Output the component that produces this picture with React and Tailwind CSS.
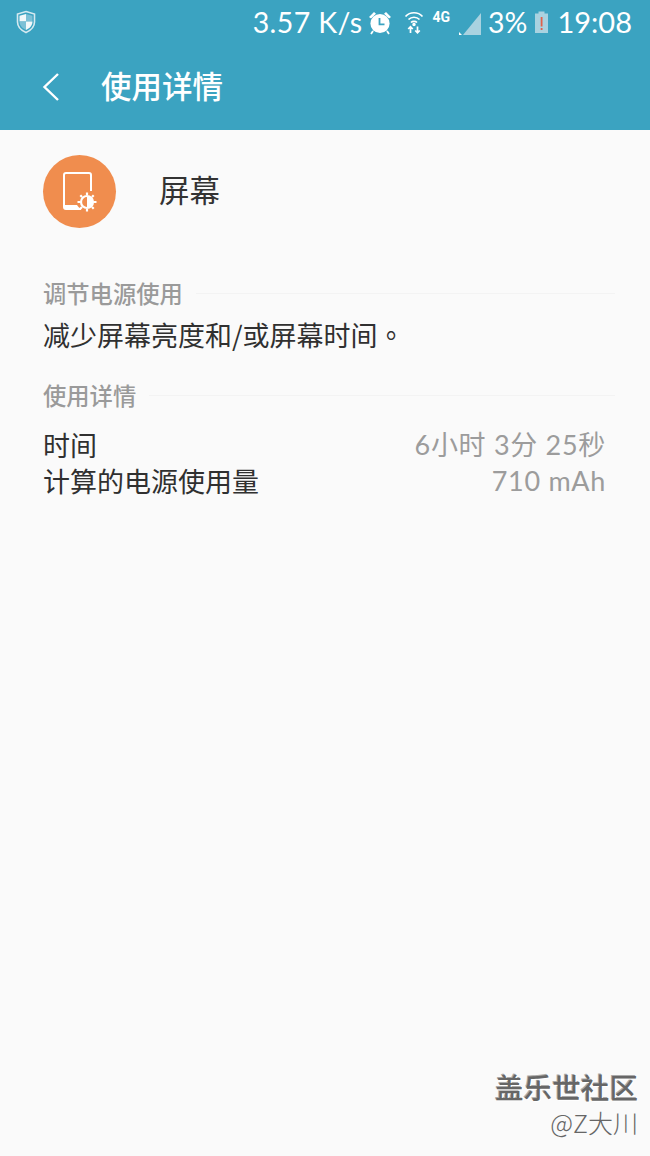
function Shield() {
  return (
    <svg width="20" height="24" viewBox="0 0 20 24">
      <path d="M10 1.5 L18.5 4 V12 C18.5 17 14.5 20.5 10 22.5 C5.5 20.5 1.5 17 1.5 12 V4 Z" fill="none" stroke="#d5e9f0" strokeWidth="1.6" />
      <path d="M10 4 L16.5 5.8 V11.5 H10 Z" fill="#7cc0d6" />
      <path d="M10 4 L3.5 5.8 V11.5 H10 Z" fill="#f2f8fa" />
      <path d="M3.5 11.5 H10 V20 C6.5 18.5 3.5 15.5 3.5 11.5 Z" fill="#7cc0d6" />
      <path d="M16.5 11.5 H10 V20 C13.5 18.5 16.5 15.5 16.5 11.5 Z" fill="#f2f8fa" />
    </svg>
  );
}

function Alarm() {
  return (
    <svg width="24" height="25" viewBox="0 0 24 25">
      <circle cx="12" cy="13.5" r="9.6" fill="#fff" />
      <path d="M1 7 L6 2 L8 3.8 L3 8.6 Z M23 7 L18 2 L16 3.8 L21 8.6 Z" fill="#fff" />
      <path d="M5 21 L3 24 M19 21 L21 24" stroke="#fff" strokeWidth="1.8" />
      <path d="M11.5 8 V14.3 H16.5" fill="none" stroke="#3ba3c1" strokeWidth="1.8" />
    </svg>
  );
}

function Wifi() {
  return (
    <svg width="20" height="24" viewBox="0 0 20 24" fill="none" stroke="#fff" strokeWidth="1.7">
      <path d="M1.5 6.5 C6 1.5 14 1.5 18.5 6.5" />
      <path d="M4.5 9.5 C7.5 6.5 12.5 6.5 15.5 9.5" />
      <path d="M7 12.5 C8.5 11 11.5 11 13 12.5" />
      <circle cx="10" cy="14.5" r="0.9" fill="#fff" />
      <path d="M6.5 23 V17 M4.2 19 L6.5 16.8 L8.8 19" />
      <path d="M13.5 16.5 V22.5 M11.2 20.5 L13.5 22.8 L15.8 20.5" />
    </svg>
  );
}

function Signal() {
  return (
    <svg width="24" height="24" viewBox="0 0 24 24">
      <path d="M23 1 V23 H5 Z" fill="#a9d2e0" />
      <path d="M1 23 V20 L4 23 Z" fill="#fff" />
    </svg>
  );
}

function Battery() {
  return (
    <svg width="15" height="24" viewBox="0 0 15 24">
      <path d="M4.5 1.5 H10.5 V3.5 H14 V23 H1 V3.5 H4.5 Z" fill="#a9d2e0" />
      <rect x="6.7" y="7" width="1.8" height="9.5" fill="#e0614a" />
      <rect x="6.7" y="18" width="1.8" height="2" fill="#e0614a" />
    </svg>
  );
}

function ScreenIcon() {
  return (
    <svg width="34" height="40" viewBox="0 0 34 40" fill="none">
      <path d="M18 37 H3 C1.8 37 1 36.2 1 35 V3 C1 1.8 1.8 1 3 1 H26 C27.2 1 28 1.8 28 3 V19" stroke="#fff" strokeWidth="2" />
      <path d="M2 33 H14 C15 35 17 36 18 37 H3 C2 37 2 36 2 35 Z" fill="#fff" />
      <circle cx="24" cy="30" r="6" stroke="#fff" strokeWidth="2.2" />
      <path d="M24 24 A6 6 0 0 1 24 36 Z" fill="#fff" />
      <path d="M24 20.5 V23 M24 37 V39.5 M14.5 30 H17 M31 30 H33.5 M17.3 23.3 L19 25 M29 35 L30.7 36.7 M17.3 36.7 L19 35 M29 25 L30.7 23.3" stroke="#fff" strokeWidth="2.2" />
    </svg>
  );
}

function Section({ title }) {
  return (
    <div className="flex items-center">
      <span className="text-[23.3px] leading-[30px] font-medium text-[#9a9a9a] whitespace-nowrap">{title}</span>
      <div className="ml-[13px] mr-[35px] h-px flex-1 bg-[#f3f3f3]" />
    </div>
  );
}

function Row({ label, value }) {
  return (
    <div className="flex items-center justify-between pr-[44px] h-[36px]">
      <span className="text-[27px] leading-[36px] text-[#303030] whitespace-nowrap">{label}</span>
      <span className="font-['Lato','Noto_Sans_CJK_SC',sans-serif] text-[27px] leading-[36px] text-[#9c9c9c] whitespace-nowrap tracking-[0.7px]">{value}</span>
    </div>
  );
}

export default function App() {
  return (
    <div className="flex h-[1156px] w-[650px] flex-col overflow-hidden bg-[#fafafa] font-['Noto_Sans_CJK_SC',Roboto,sans-serif]">
      <header className="h-[130px] shrink-0 bg-[#3ba3c1] text-white">
        <div className="flex h-[44px] items-center pl-[16px] pr-[18px] font-['Lato',sans-serif]">
          <Shield />
          <div className="ml-auto flex items-center">
            <span className="text-[28.5px] leading-[44px] tracking-[0.4px] whitespace-nowrap">3.57 K/s</span>
            <div className="ml-[5px]"><Alarm /></div>
            <div className="ml-[12px]"><Wifi /></div>
            <span className="ml-[9px] mb-[10px] font-['Roboto',sans-serif] text-[14px] leading-[14px] font-bold">4G</span>
            <div className="ml-[8px] mt-[4px]"><Signal /></div>
            <span className="ml-[6px] text-[28.5px] leading-[44px] whitespace-nowrap">3%</span>
            <div className="ml-[7px]"><Battery /></div>
            <span className="ml-[8px] text-[29px] leading-[44px] whitespace-nowrap">19:08</span>
          </div>
        </div>
        <div className="flex h-[86px] items-center pl-[42px]">
          <svg width="18" height="30" viewBox="0 0 18 30" fill="none" stroke="#fff" strokeWidth="2.4">
            <path d="M16 2 L2.5 15 L16 28" />
          </svg>
          <span className="ml-[41px] pb-[4px] text-[30.5px] leading-[40px] font-medium whitespace-nowrap">使用详情</span>
        </div>
      </header>

      <main className="flex min-h-0 flex-1 flex-col pl-[43px]">
        <div className="mt-[25px] flex items-center">
          <div className="flex h-[73px] w-[73px] items-center justify-center rounded-full bg-[#f08d4e]">
            <ScreenIcon />
          </div>
          <span className="ml-[43px] pb-[5px] text-[30.5px] leading-[40px] text-[#333333]">屏幕</span>
        </div>

        <div className="mt-[50px]">
          <Section title="调节电源使用" />
        </div>
        <p className="mt-[7px] text-[27px] leading-[40px] text-[#303030] whitespace-nowrap">
          减少屏幕亮度和/或屏幕时间<span className="font-['Noto_Sans_CJK_TC',sans-serif]">。</span>
        </p>

        <div className="mt-[25px]">
          <Section title="使用详情" />
        </div>
        <div className="mt-[17px]">
          <Row label="时间" value="6小时 3分 25秒" />
          <Row label="计算的电源使用量" value="710 mAh" />
        </div>

        <div className="mt-auto mb-[18px] pr-[12px] text-right">
          <div className="text-[28.5px] leading-[39px] font-medium tracking-[0.1px] text-[#666666] [text-shadow:1px_1px_0_#ffffff,-1px_-1px_0_#aaaaaa] whitespace-nowrap">盖乐世社区</div>
          <div className="text-[25px] leading-[32px] font-light text-[#666666] whitespace-nowrap">@Z大川</div>
        </div>
      </main>
    </div>
  );
}
